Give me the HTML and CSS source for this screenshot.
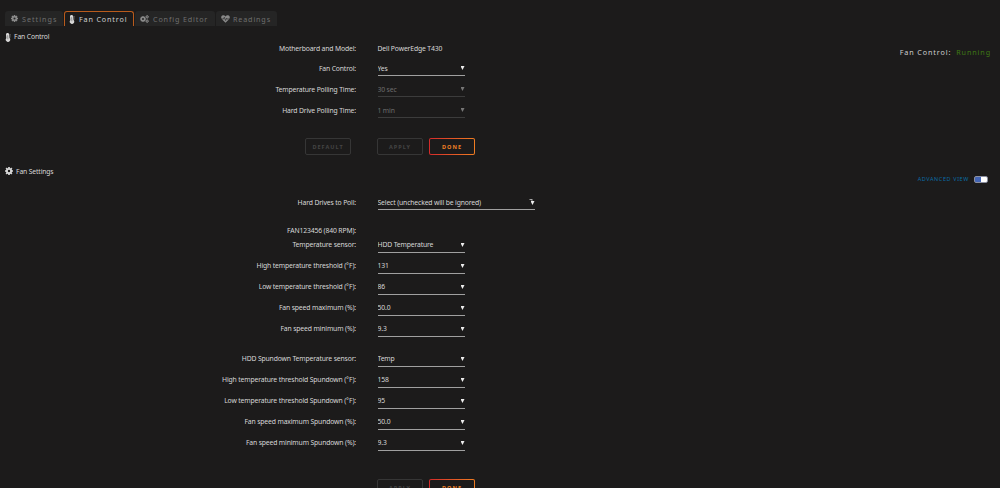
FILE: index.html
```html
<!doctype html>
<html lang="en">
    <head>
        <meta charset="UTF-8" />
        <meta name="viewport" content="width=device-width, initial-scale=1.0" />
        <title>Fan Control</title>
        <link rel="stylesheet" href="styles.css">
    </head>
    <body>
        <svg class="sprite" width="0" height="0">
            <symbol id="gear" viewBox="0 0 16 16">
                <circle cx="8" cy="8" r="4.3" fill="none" stroke="currentColor" stroke-width="3.8" />
                <path d="M8 0v3M8 13v3M0 8h3M13 8h3M2.3 2.3l2.2 2.2M11.5 11.5l2.2 2.2M2.3 13.7l2.2-2.2M11.5 4.5l2.2-2.2" stroke="currentColor" stroke-width="3.4" />
            </symbol>
            <symbol id="gears" viewBox="0 0 18 16">
                <circle cx="6" cy="8" r="3.5" fill="none" stroke="currentColor" stroke-width="3" />
                <path d="M6 2v2M6 12v2M0 8h2M10 8h2M1.8 3.8l1.4 1.4M8.8 10.8l1.4 1.4M1.8 12.2l1.4-1.4M8.8 5.2l1.4-1.4" stroke="currentColor" stroke-width="2.4" />
                <circle cx="14.3" cy="3.7" r="2" fill="none" stroke="currentColor" stroke-width="2" />
                <circle cx="14.3" cy="12.3" r="2" fill="none" stroke="currentColor" stroke-width="2" />
                <path d="M14.3 0v2M14.3 5.5v2M11 3.7h2M16 3.7h2M14.3 8.5v2M14.3 14v2M11 12.3h2M16 12.3h2" stroke="currentColor" stroke-width="1.4" />
            </symbol>
            <symbol id="thermo" viewBox="0 0 10 18">
                <path d="M1 3a3 3 0 0 1 6.2 0l.8 7.2a4.4 4.4 0 1 1-6.4.3z" fill="currentColor" />
                <path d="M4.3 4.5l.5 8" stroke="#1c1b1b" stroke-width=".8" />
                <path d="M8 3h2M8 5.5h2M8.2 8h1.8" stroke="currentColor" stroke-width="1" />
            </symbol>
            <symbol id="heart" viewBox="0 0 18 16">
                <path d="M9 15.5L1.8 8.5C-.5 6 .2 2.5 2.7 1.2 5 0 7.5 1 9 3c1.5-2 4-3 6.3-1.8 2.5 1.3 3.2 4.8.9 7.3z" fill="currentColor" />
                <path d="M0 8h5l1.6-3.5 2.6 6.5 2-4.5.9 1.5H18" fill="none" stroke="#252525" stroke-width="1.3" />
            </symbol>
        </svg>

        <nav class="tabs">
            <a class="tab tab-settings"><svg class="icon"><use href="#gear" /></svg><span>Settings</span></a>
            <a class="tab tab-fan active"><svg class="icon thermo"><use href="#thermo" /></svg><span>Fan Control</span></a>
            <a class="tab tab-config"><svg class="icon wide"><use href="#gears" /></svg><span>Config Editor</span></a>
            <a class="tab tab-readings"><svg class="icon wide"><use href="#heart" /></svg><span>Readings</span></a>
        </nav>

        <section class="control">
            <header class="title"><svg class="icon thermo"><use href="#thermo" /></svg><span>Fan Control</span></header>
            <div class="status">Fan Control: <span class="running">Running</span></div>
            <form class="form">
                <div class="row model"><label>Motherboard and Model:</label><span>Dell PowerEdge T430</span></div>
                <div class="row"><label>Fan Control:</label><div class="select"><select><option>Yes</option></select></div></div>
                <div class="row"><label>Temperature Polling Time:</label><div class="select disabled"><select disabled><option>30 sec</option></select></div></div>
                <div class="row"><label>Hard Drive Polling Time:</label><div class="select disabled"><select disabled><option>1 min</option></select></div></div>
                <div class="buttons">
                    <button type="button" class="default" disabled>Default</button>
                    <button type="button" disabled>Apply</button>
                    <button type="button" class="done">Done</button>
                </div>
            </form>
        </section>

        <section class="settings">
            <header class="title"><svg class="icon gear"><use href="#gear" /></svg><span>Fan Settings</span></header>
            <div class="advanced">Advanced View <span class="switch"></span></div>
            <form class="form">
                <div class="row drives"><label>Hard Drives to Poll:</label><div class="select multi"><select><option>Select (unchecked will be ignored)</option></select></div></div>
                <div class="row fan"><label>FAN123456 (840 RPM):</label></div>
                <div class="row"><label>Temperature sensor:</label><div class="select"><select><option>HDD Temperature</option></select></div></div>
                <div class="row"><label>High temperature threshold (°F):</label><div class="select"><select><option>131</option></select></div></div>
                <div class="row"><label>Low temperature threshold (°F):</label><div class="select"><select><option>86</option></select></div></div>
                <div class="row"><label>Fan speed maximum (%):</label><div class="select"><select><option>50.0</option></select></div></div>
                <div class="row"><label>Fan speed minimum (%):</label><div class="select"><select><option>9.3</option></select></div></div>
                <div class="row spundown"><label>HDD Spundown Temperature sensor:</label><div class="select"><select><option>Temp</option></select></div></div>
                <div class="row"><label>High temperature threshold Spundown (°F):</label><div class="select"><select><option>158</option></select></div></div>
                <div class="row"><label>Low temperature threshold Spundown (°F):</label><div class="select"><select><option>95</option></select></div></div>
                <div class="row"><label>Fan speed maximum Spundown (%):</label><div class="select"><select><option>50.0</option></select></div></div>
                <div class="row"><label>Fan speed minimum Spundown (%):</label><div class="select"><select><option>9.3</option></select></div></div>
                <div class="buttons">
                    <button type="button" disabled>Apply</button>
                    <button type="button" class="done">Done</button>
                </div>
            </form>
        </section>
    </body>
</html>
```
FILE: styles.css
```css
* {
    box-sizing: border-box;
}
html,
body {
    height: 488px;
    overflow: hidden;
}
body {
    margin: 0;
    padding-top: 11px;
    background: #1c1b1b;
    color: #d8d8d8;
    font-family: "Noto Sans", sans-serif;
    font-size: 6.8px;
    letter-spacing: -0.14px;
    line-height: 10px;
}
.sprite {
    display: block;
}
.icon {
    width: 7px;
    height: 7px;
    flex: none;
}
.icon.gear {
    width: 8px;
    height: 8px;
}
.icon.wide {
    width: 9px;
    height: 8px;
}
.icon.thermo {
    width: 6px;
    height: 9px;
}

/* tabs */
.tabs {
    display: flex;
    gap: 1px;
    height: 15px;
    padding-left: 5px;
}
.tab {
    display: flex;
    align-items: center;
    height: 15px;
    padding-left: 5px;
    border-radius: 3px 3px 0 0;
    background: #252525;
    color: #6f6f6f;
    font-size: 7.2px;
    letter-spacing: 0.85px;
    white-space: nowrap;
}
.tab .icon {
    margin-right: 4px;
    color: #8a8a8a;
}
.tab-settings {
    width: 58px;
    padding-left: 6px;
    letter-spacing: 1px;
}
.tab-fan {
    width: 70px;
}
.tab-config {
    width: 80px;
}
.tab-readings {
    width: 61px;
}
.tab-readings .icon {
    margin-right: 3px;
}
.tab.active {
    padding-left: 4px;
    border: 1px solid #b95b1c;
    border-bottom: 0;
    background: #1c1b1b;
    color: #d0d0d0;
}
.tab.active .icon {
    color: #d8d8d8;
}

/* sections */
section {
    position: relative;
}
.control {
    height: 134px;
    padding-top: 6px;
}
.settings {
    padding-top: 6px;
}
.title {
    display: flex;
    align-items: center;
    gap: 3px;
    height: 10px;
    padding-left: 5px;
}
.settings .title {
    line-height: 12px;
}
.settings .title span {
    padding-top: 1px;
}
.status {
    position: absolute;
    top: 21px;
    right: 9px;
    font-size: 7.2px;
    letter-spacing: 0.9px;
    color: #cfcfcf;
}
.running {
    margin-left: 2px;
    color: #3f7a14;
}
.advanced {
    position: absolute;
    top: 14px;
    right: 12px;
    display: flex;
    align-items: center;
    gap: 5px;
    color: #0a6ca6;
    font-size: 5.5px;
    letter-spacing: 0.6px;
    text-transform: uppercase;
}
.switch {
    width: 14px;
    height: 7px;
    border: 1px solid #8b8fa0;
    border-radius: 2px;
    background: linear-gradient(90deg, #4365b5 50%, #fff 50%) border-box;
}

/* form */
.row {
    display: grid;
    grid-template-columns: 356px 158px;
    column-gap: 21.5px;
    height: 21px;
    line-height: 14px;
}
.row label {
    text-align: right;
    white-space: nowrap;
}
.control .row,
.row.drives {
    line-height: 15px;
}
.row.model {
    height: 20px;
    margin-top: -1px;
}
.row.drives {
    height: 29px;
    margin-top: 19px;
}
.row.fan {
    height: 14px;
}
.row.spundown {
    margin-top: 9px;
}
.select {
    position: relative;
    width: 87px;
    height: 15px;
    border-bottom: 1px solid #a0a0a0;
}
.select.multi {
    width: 157px;
}
.select select {
    display: block;
    width: 100%;
    height: 14px;
    padding: 0;
    border: 0;
    background: transparent;
    color: inherit;
    font: inherit;
    letter-spacing: inherit;
    appearance: none;
}
.select::after {
    content: "";
    position: absolute;
    right: 0;
    top: 5px;
    width: 4px;
    height: 4px;
    background: #eee;
    clip-path: polygon(0 0, 100% 0, 50% 100%);
}
.select.multi::after {
    top: 6px;
}
.select.multi::before {
    content: "";
    position: absolute;
    right: 2px;
    top: 4px;
    width: 4px;
    height: 2px;
    background: #aaa;
    clip-path: polygon(0 0, 100% 0, 100% 100%);
}
.select.disabled {
    border-color: #3c3c3c;
    color: #6e6e6e;
}
.select.disabled select {
    opacity: 1;
}
.select.disabled::after {
    background: #777;
}

/* buttons */
.buttons {
    display: flex;
    gap: 6px;
    margin-top: 14px;
    padding-left: 377px;
}
.settings .buttons {
    margin-top: 22px;
}
button {
    width: 46px;
    height: 17px;
    padding: 0;
    border: 1.5px solid #363636;
    border-radius: 2px;
    background: transparent;
    color: #444;
    font: bold 5.5px/12px "Noto Sans", sans-serif;
    letter-spacing: 1px;
    text-transform: uppercase;
}
.default {
    margin-left: -72px;
    margin-right: 20px;
}
.done {
    border-color: transparent;
    background:
        linear-gradient(#1c1b1b, #1c1b1b) padding-box,
        linear-gradient(90deg, #d42a2a, #ef7d22) border-box;
    color: #f08025;
}
```
